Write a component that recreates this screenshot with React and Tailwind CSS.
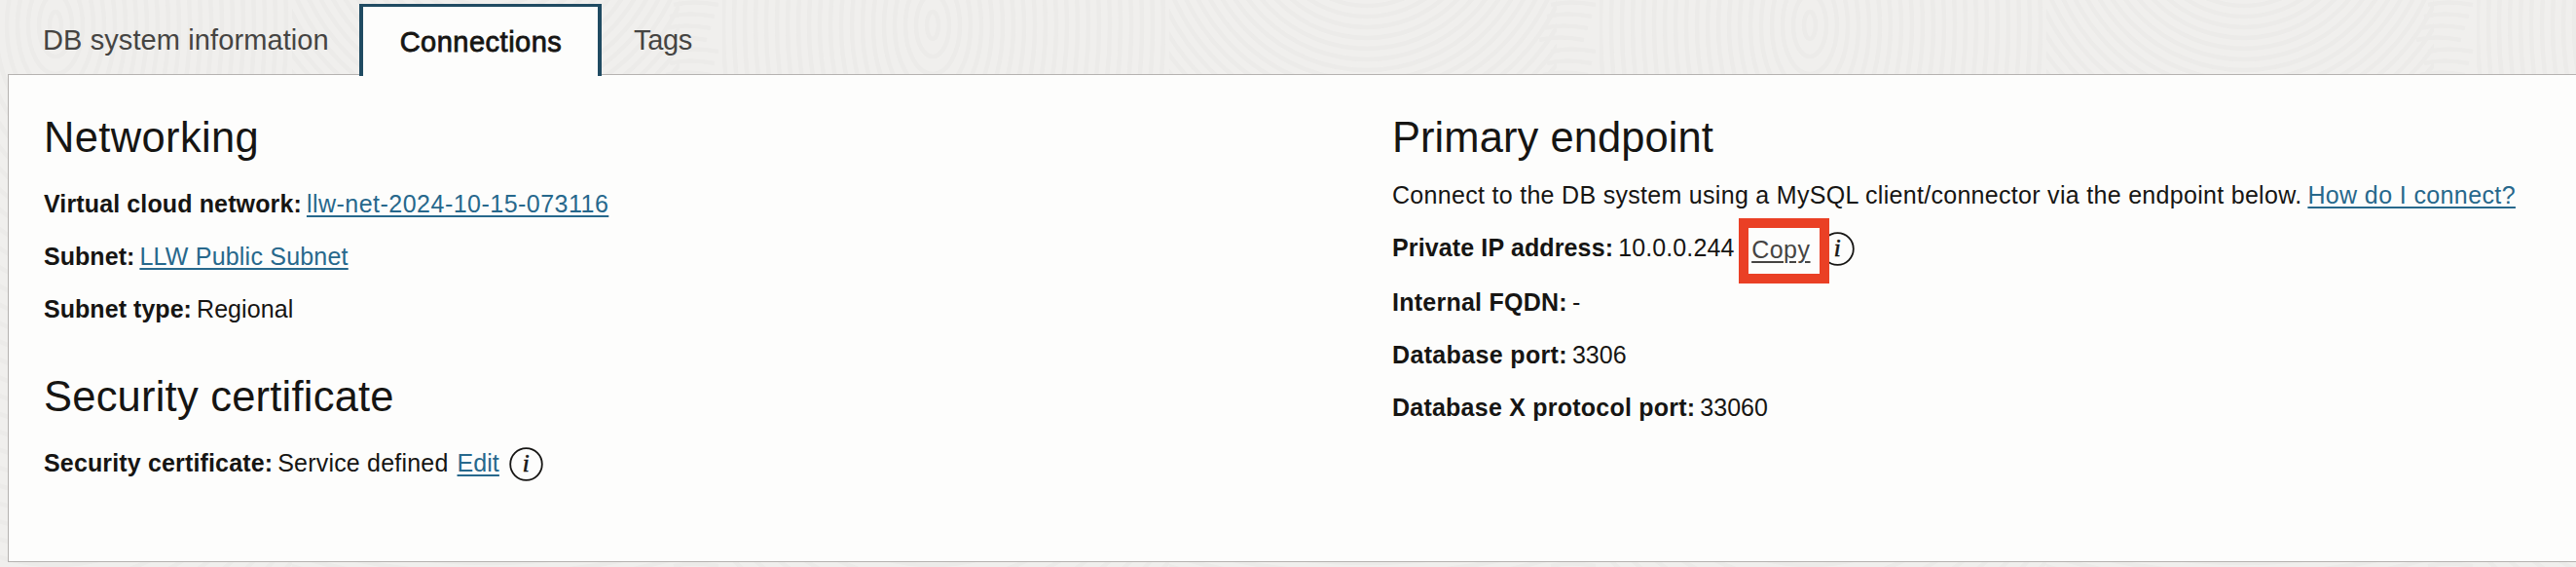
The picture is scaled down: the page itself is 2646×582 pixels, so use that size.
const steps = (n) => Array.from({ length: n }, (_, i) => i);

function Backdrop() {
  return (
    <svg className="absolute inset-0 h-full w-full" fill="none" stroke="#ecebe9" strokeWidth="4.5" aria-hidden="true">
      <defs>
        <clipPath id="arcs"><rect x="0" y="0" width="398" height="582" /></clipPath>
        <clipPath id="ovals"><rect x="442" y="0" width="459" height="582" /></clipPath>
        <pattern id="grain" x="300" y="0" width="901" height="582" patternUnits="userSpaceOnUse">
          <g clipPath="url(#arcs)">
            {steps(60).map((i) => (
              <circle key={i} cx="203" cy="-90" r={85 + i * 11} />
            ))}
          </g>
          <g>
            {steps(50).map((i) => (
              <path key={i} d={`M${392 - (i % 4) * 4} ${5 + i * 12} q20 -5 46 0`} />
            ))}
          </g>
          <g clipPath="url(#ovals)">
            {steps(44).map((i) => (
              <ellipse key={i} cx="658" cy="26" rx={6 + i * 11} ry={14 + i * 18} />
            ))}
          </g>
        </pattern>
      </defs>
      <rect width="100%" height="100%" fill="url(#grain)" stroke="none" />
    </svg>
  );
}

function InfoIcon() {
  return (
    <svg className="h-[35px] w-[35px] shrink-0" viewBox="0 0 35 35" aria-hidden="true">
      <circle cx="17.5" cy="17.5" r="16.3" fill="#fdfdfc" stroke="#161513" strokeWidth="1.8" />
      <text x="17.2" y="25.2" textAnchor="middle" fill="#161513" stroke="#161513" strokeWidth="0.6" className="font-['Liberation_Serif',serif] text-[25px] italic">
        i
      </text>
    </svg>
  );
}

const link = "text-[#27688c] underline decoration-2 underline-offset-[2.5px] [text-decoration-skip-ink:none]";
const heading = "text-[43.5px] leading-[60px]";

function Row({ label, labelClass, className = "h-[54px]", children }) {
  return (
    <div className={`flex ${className}`}>
      <span className={`mr-[5px] font-bold ${labelClass}`}>{label}</span>
      {children}
    </div>
  );
}

export default function App() {
  return (
    <div className="relative h-[582px] w-[2646px] overflow-hidden bg-[#f0efed] font-['Liberation_Sans',Arial,sans-serif] text-[#161513] antialiased">
      <Backdrop />
      <div className="relative flex h-full flex-col whitespace-nowrap">
        <nav className="z-10 flex h-[76px] items-start pl-[44px] text-[29px] leading-[40px] text-[#454442]">
          <a className="mt-[21px] w-[325px] tracking-[0.1px]">DB system information</a>
          <a className="mt-1 flex h-[74px] w-[249px] justify-center border-x-4 border-t-[3px] border-[#204b62] bg-[#fdfdfc] pt-[16px] pl-px tracking-[0.5px] text-[#161513] [-webkit-text-stroke:0.8px_#161513]">
            Connections
          </a>
          <a className="mt-[21px] ml-[33px] tracking-[-0.3px]">Tags</a>
        </nav>
        <main className="ml-2 flex h-[501px] border-y border-l border-[#b5b2b0] bg-[#fdfdfc] pt-[34px] pl-[36px] text-[25px] leading-[54px]">
          <div className="w-[1385px]">
            <h2 className={`${heading} tracking-[0.35px]`}>Networking</h2>
            <div className="mt-[11px]">
              <Row label="Virtual cloud network:" labelClass="tracking-[0.13px]">
                <a className={`${link} tracking-[0.48px]`}>llw-net-2024-10-15-073116</a>
              </Row>
              <Row label="Subnet:" labelClass="tracking-[0.05px]">
                <a className={`${link} tracking-[0.21px]`}>LLW Public Subnet</a>
              </Row>
              <Row label="Subnet type:" labelClass="tracking-[0.05px]">
                <span className="tracking-[0.08px]">Regional</span>
              </Row>
            </div>
            <h2 className={`${heading} mt-[33px] tracking-[0.22px]`}>Security certificate</h2>
            <div className="mt-[11px]">
              <Row label="Security certificate:" labelClass="tracking-[0.15px]">
                <span className="tracking-[0.2px]">Service defined</span>
                <a className={`${link} ml-[9px] tracking-[0.07px]`}>Edit</a>
                <span className="ml-[10px] pt-[11px]"><InfoIcon /></span>
              </Row>
            </div>
          </div>
          <div>
            <h2 className={`${heading} tracking-[0.06px]`}>Primary endpoint</h2>
            <p className="mt-[2px] flex h-[54px]">
              <span className="mr-[6px] tracking-[0.3px]">
                Connect to the DB system using a MySQL client/connector via the endpoint below.
              </span>
              <a className={`${link} tracking-[0.38px]`}>How do I connect?</a>
            </p>
            <Row label="Private IP address:" labelClass="tracking-[0.13px]" className="h-[56px]">
              <span className="w-[137px] tracking-[0.12px]">10.0.0.244</span>
              <span className="relative mt-[2px] h-[54px] w-[60px]">
                <a className="tracking-[0.5px] text-[#454442] underline decoration-2 underline-offset-[3px]">Copy</a>
                <span className="absolute top-[-5px] left-[-13px] z-10 h-[67px] w-[93px] border-10 border-[#ea4025]" />
              </span>
              <span className="ml-[11px] pt-[11px]"><InfoIcon /></span>
            </Row>
            <Row label="Internal FQDN:" labelClass="tracking-[0.25px]">
              <span>-</span>
            </Row>
            <Row label="Database port:" labelClass="tracking-[0.35px]">
              <span>3306</span>
            </Row>
            <Row label="Database X protocol port:" labelClass="tracking-[0.23px]">
              <span>33060</span>
            </Row>
          </div>
        </main>
      </div>
    </div>
  );
}
